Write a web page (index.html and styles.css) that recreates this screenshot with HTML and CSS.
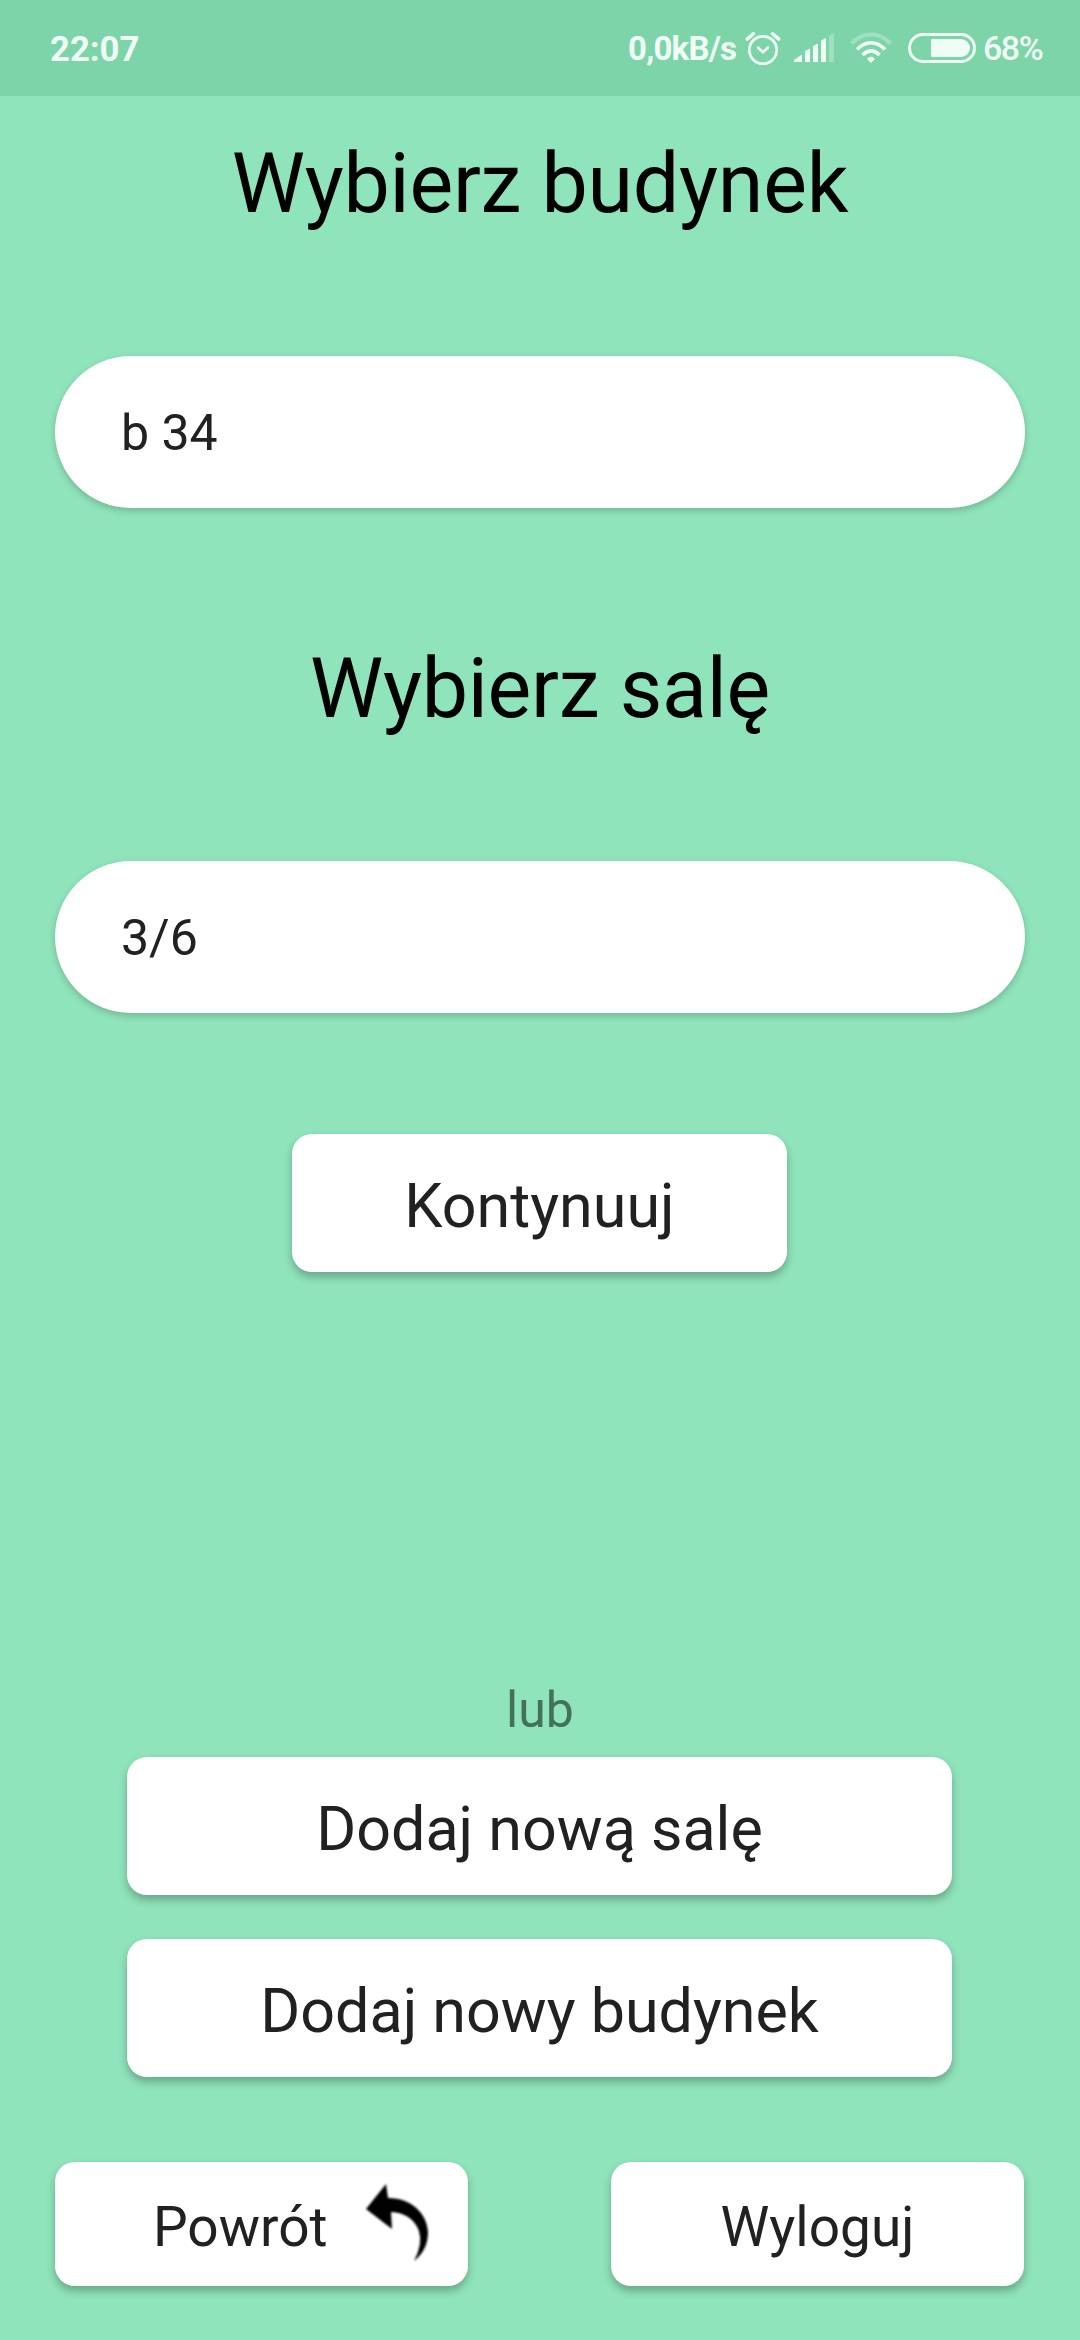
FILE: index.html
```html
<!DOCTYPE html>
<html lang="pl">
<head>
<meta charset="utf-8">
<title>Wybierz budynek</title>
<link rel="stylesheet" href="styles.css">
</head>
<body>
<header class="status">
  <span class="clock">22:07</span>
  <div class="indicators">
    <span class="speed">0,0kB/s</span>
    <svg class="alarm" width="36" height="36" viewBox="0 0 36 36" fill="none" stroke="currentColor" stroke-width="2.7"><circle cx="18" cy="20" r="13.700"/><path d="M13 17.500l5 4.700 5-4.700" stroke-width="2.500" stroke-linecap="round"/><path d="M2.300 9l6-5.200M33.700 9l-6-5.200" stroke-width="3.600" stroke-linecap="round"/></svg>
    <svg class="signal" width="40" height="30" viewBox="0 0 40 30" fill="currentColor"><path d="M0 29V27L8 21.500V29ZM11 29V18L16 15.500V29ZM19 29V13L24 10.500V29ZM27 29V7.500L32 5V29Z"/><path d="M35 29V2.500L40 0V29Z" opacity=".3"/></svg>
    <svg class="wifi" width="42" height="32" viewBox="0 0 42 32" fill="none" stroke="currentColor" stroke-width="3.600"><path d="M1.500 11.500C13-.5 29-.5 40.500 11.500" stroke-width="4" opacity=".3"/><path d="M7 17.500C15.500 8.500 26.500 8.500 35 17.500M12.500 23C18 17.500 24 17.500 29.500 23"/><path d="M17 27Q21 22.500 25 27L21 31Z" fill="currentColor" stroke="none"/></svg>
    <svg class="battery" width="68" height="30" viewBox="0 0 68 30"><rect x="1.500" y="1.500" width="65" height="27" rx="13.500" fill="none" stroke="currentColor" stroke-width="3"/><path d="M24 6H53a9 9 0 0 1 0 18H24a1 1 0 0 1-1-1V7a1 1 0 0 1 1-1Z" fill="currentColor"/></svg>
    <span class="percent">68%</span>
  </div>
</header>
<main class="screen">
  <h1 class="heading">Wybierz budynek</h1>
  <div class="field">b 34</div>
  <h1 class="heading room">Wybierz salę</h1>
  <div class="field">3/6</div>
  <button class="button continue">Kontynuuj</button>
  <p class="or">lub</p>
  <button class="button wide">Dodaj nową salę</button>
  <button class="button wide">Dodaj nowy budynek</button>
  <nav class="footer">
    <button class="button small back"><span>Powrót</span><svg class="arrow" width="64" height="80" viewBox="0 0 64 80"><path d="M0 26L20 1L22 15C46 15 61 31 62 49Q62 67 48 78Q57 61 53 48Q46 30 25 29L26 46Z"/></svg></button>
    <button class="button small">Wyloguj</button>
  </nav>
</main>
</body>
</html>
```
FILE: styles.css
```css
* { box-sizing: border-box; }
body { margin: 0; width: 1080px; height: 2340px; background: #8fe4bb; font-family: Roboto, sans-serif; color: #212121; overflow: hidden; }
.status { height: 96px; padding: 0 36px 0 50px; display: flex; align-items: center; justify-content: space-between; background: #7ed4a9; color: #effdf6; font-size: 33px; }
.clock { padding-top: 2px; font-weight: 700; font-size: 34.7px; }
.indicators { display: flex; align-items: center; }
.speed { width: 109px; padding-top: 1px; font-weight: 700; letter-spacing: -0.8px; white-space: nowrap; }
.alarm { margin-left: 8px; }
.signal { margin-left: 13px; }
.wifi { margin-left: 16px; }
.battery { margin-left: 16px; }
.percent { width: 61px; margin-left: 7px; font-size: 34px; font-weight: 500; letter-spacing: -1.5px; white-space: nowrap; }
.screen { height: 2244px; padding: 39px 55px 0; display: flex; flex-direction: column; align-items: center; }
.heading { margin: 0 0 123px; height: 98px; line-height: 98px; font-weight: 400; font-size: 82.5px; letter-spacing: -0.25px; color: #000; white-space: nowrap; }
.room { margin-top: 132px; }
.field { width: 970px; height: 152px; flex-shrink: 0; padding: 1px 0 0 66px; border-radius: 76px; background: #fff; box-shadow: 0 3px 7px #0003; font-size: 50px; line-height: 152px; }
.button { border: 0; padding: 7px 0 0; flex-shrink: 0; border-radius: 20px; background: #fff; box-shadow: 0 5px 8px #0004; font: 400 61px/1 Roboto, sans-serif; color: #212121; }
.continue { width: 495px; height: 138px; margin: 121px 1px 0 0; }
.or { margin: 408px 0 17px; height: 60px; line-height: 60px; font-size: 50px; color: #437159; }
.wide { width: 825px; height: 138px; margin: 0 1px 44px 0; }
.footer { width: 970px; margin-top: 41px; padding-right: 1px; display: flex; justify-content: space-between; }
.small { width: 413px; height: 124px; font-size: 55px; }
.back { display: flex; align-items: center; padding-left: 98px; gap: 38px; }
.arrow { margin-top: -9px; filter: blur(0.8px); }
```
